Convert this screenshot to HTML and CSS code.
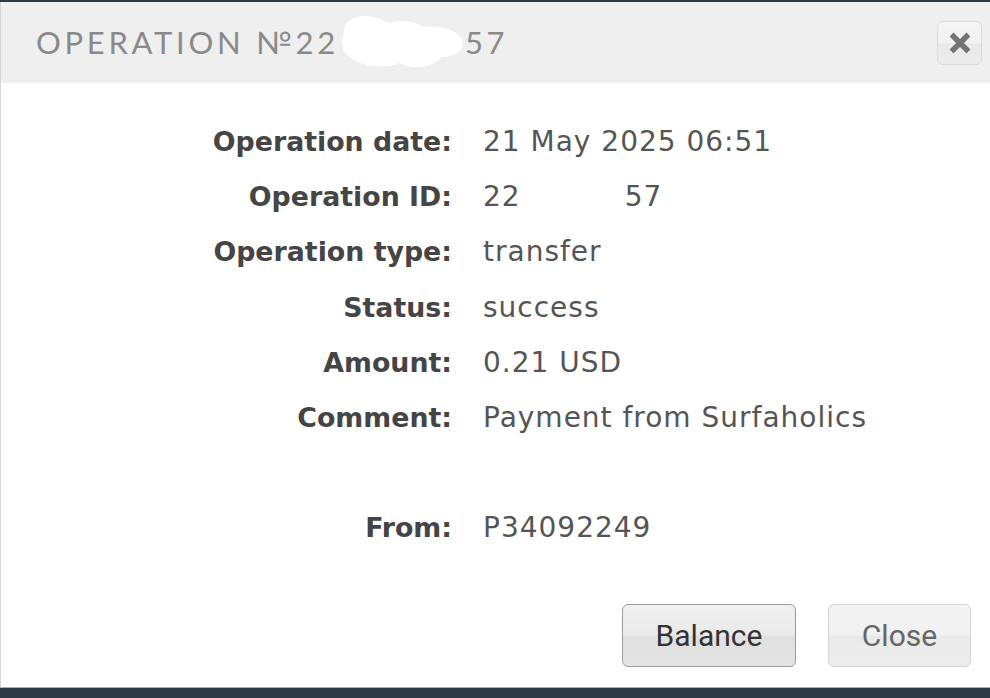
FILE: index.html
```html
<!DOCTYPE html>
<html lang="en">
<head>
<meta charset="utf-8">
<title>Operation</title>
<link rel="stylesheet" href="styles.css">
</head>
<body>
<div class="modal">
  <div class="modal-header">
    <h2 class="title">OPERATION №22<span class="mask"><svg width="128" height="58" viewBox="0 0 128 58"><path d="M14 6 C26 0 40 4 50 10 C62 6 76 8 86 14 C100 12 118 16 124 26 C128 36 118 44 104 44 C94 54 76 58 62 50 C48 56 26 54 16 46 C4 42 2 30 6 20 C6 14 8 9 14 6 Z" fill="#ffffff"/></svg></span>57</h2>
    <button class="close-x" type="button" aria-label="Close">
      <svg width="22" height="22" viewBox="0 0 22 22"><path d="M4.5 4.5 L17.5 17.5 M17.5 4.5 L4.5 17.5" stroke="#747474" stroke-width="5.5" stroke-linecap="square"/></svg>
    </button>
  </div>
  <div class="modal-body">
    <dl class="details">
      <dt>Operation date:</dt><dd>21 May 2025 06:51</dd>
      <dt>Operation ID:</dt><dd>22<span class="gap"></span>57</dd>
      <dt>Operation type:</dt><dd>transfer</dd>
      <dt>Status:</dt><dd>success</dd>
      <dt>Amount:</dt><dd>0.21 USD</dd>
      <dt>Comment:</dt><dd>Payment from Surfaholics</dd>
      <dt class="empty"></dt><dd class="empty"></dd>
      <dt>From:</dt><dd>P34092249</dd>
    </dl>
  </div>
  <div class="modal-footer">
    <button class="btn btn-primary" type="button">Balance</button>
    <button class="btn btn-light" type="button">Close</button>
  </div>
</div>
</body>
</html>
```

FILE: styles.css
```css
html, body {
  margin: 0;
  padding: 0;
}
body {
  background: #2e3a43;
  width: 990px;
  height: 698px;
  overflow: hidden;
}
.modal {
  margin-top: 2px;
  height: 685px;
  background: #ffffff;
  border-left: 1px solid #d6d6d6;
  border-bottom: 1px solid #a7adb1;
  display: flex;
  flex-direction: column;
}
.modal-header {
  height: 81px;
  background: #efefef;
  display: flex;
  align-items: center;
  justify-content: space-between;
  padding: 0 8px 0 35px;
}
.title {
  margin: 0;
  font-family: "Lato", "DejaVu Sans", sans-serif;
  font-weight: 400;
  font-size: 31px;
  letter-spacing: 3.7px;
  color: #8a8a8a;
  display: flex;
  align-items: center;
  margin-top: -2px;
}
.mask {
  display: inline-block;
  width: 127px;
  height: 58px;
  margin: 0 0 0 -1px;
}
.mask svg {
  display: block;
}
.close-x {
  width: 45px;
  height: 44px;
  border: 1px solid #d9d9d9;
  border-radius: 6px;
  background: linear-gradient(#f5f5f5 0%, #f1f1f1 50%, #e9e9e9 52%, #ececec 100%);
  display: flex;
  align-items: center;
  justify-content: center;
  padding: 0;
  margin-top: 1px;
}
.close-x svg {
  display: block;
  filter: blur(0.5px);
}
.modal-body {
  padding-top: 31px;
}
.details {
  margin: 0;
  display: grid;
  grid-template-columns: 451px auto;
  column-gap: 31px;
  grid-auto-rows: 55.2px;
  align-items: center;
  font-family: "DejaVu Sans", "Liberation Sans", sans-serif;
}
.details dt {
  text-align: right;
  font-weight: 700;
  font-size: 26.8px;
  color: #454545;
}
.details dd {
  margin: 0;
  font-weight: 400;
  font-size: 28px;
  letter-spacing: 1px;
  color: #555555;
}
.gap {
  display: inline-block;
  width: 104px;
}
.modal-footer {
  margin-top: auto;
  display: flex;
  justify-content: flex-end;
  gap: 32px;
  padding: 0 19px 20px 0;
}
.btn {
  height: 63px;
  border-radius: 6px;
  font-family: "Roboto", "Liberation Sans", sans-serif;
  font-size: 30px;
  padding: 0;
}
.btn-primary {
  width: 174px;
  border: 1px solid #9c9c9c;
  color: #333333;
  background: linear-gradient(#f0f0f0 0%, #ebebeb 48%, #e0e0e0 52%, #e4e4e4 100%);
}
.btn-light {
  width: 143px;
  border: 1px solid #d4d4d4;
  color: #666666;
  background: linear-gradient(#f4f4f4 0%, #f1f1f1 48%, #eaeaea 52%, #ececec 100%);
}
```
